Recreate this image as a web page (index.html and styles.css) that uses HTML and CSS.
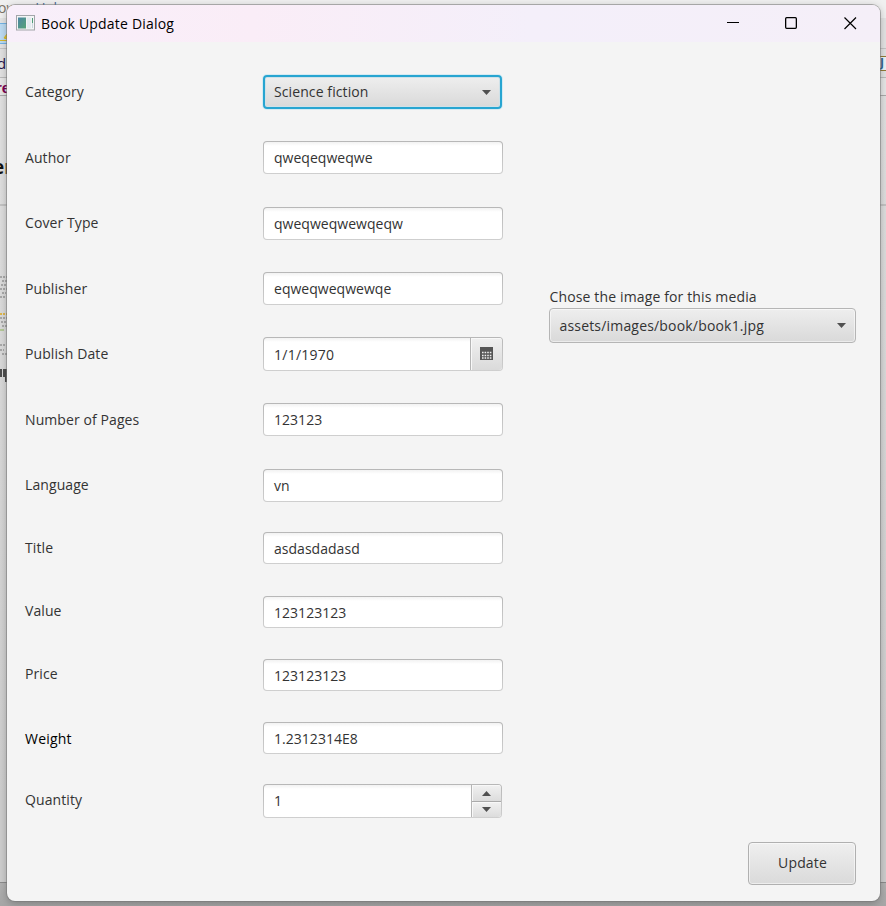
FILE: index.html
```html
<!DOCTYPE html>
<html lang="en">
<head>
<meta charset="utf-8">
<title>Book Update Dialog</title>
<link rel="stylesheet" href="styles.css">
</head>
<body>
<div class="backdrop">
  <div class="bd-menu"><span>ow</span><span>Help</span></div>
  <div class="bd-tool"><i><svg width="7" height="19"><path d="M0 16.500H7M4 14L7 10V15Z" fill="#e8c71c" stroke="#d9b92a"/></svg></i></div>
  <div class="bd-tab"><span>d</span><b class="bd-java">J</b></div>
  <div class="bd-sub"><span>re</span></div>
  <div class="bd-head"><span>er</span></div>
  <div class="bd-body">
    <svg width="7" height="118">
      <g stroke="#a9a9a9" stroke-width="2" stroke-dasharray="2 1"><path d="M0 11H7M2 15H7M1 19H7M0 23H7M2 27H6M0 31H5"/><path d="M0 52H7M1 56H7M2 60H7M0 79H5M0 84H4M2 88H7"/></g>
      <path d="M0 48H7" stroke="#e0b84c" stroke-width="2" stroke-dasharray="2 1"/><path d="M0 64H4" stroke="#b5c999" stroke-width="2"/>
      <path d="M1 103V111M4 103V111M6 103V116" stroke="#222" stroke-width="1.500"/>
    </svg>
  </div>
  <div class="bd-foot"></div>
</div>

<main class="window">
  <header class="titlebar">
    <svg class="app-icon" width="19" height="16" viewBox="0 0 19 16">
      <defs><linearGradient id="g" x1="0" y1="0" x2="1" y2="1"><stop offset="0" stop-color="#4c86a4"/><stop offset="1" stop-color="#55a477"/></linearGradient></defs>
      <rect x=".5" y=".5" width="18" height="14.500" fill="#f4f5f6" stroke="#a2a6aa"/>
      <rect x="2" y="2.500" width="8" height="11" fill="url(#g)"/>
      <rect x="11" y="2.500" width="4" height="11" fill="#e3ebf0"/>
      <path d="M16.500 3V8" stroke="#4f9c78"/><path d="M16.500 8V13" stroke="#c9d6de"/>
    </svg>
    <h1>Book Update Dialog</h1>
    <div class="controls">
      <svg class="min" width="13" height="13"><path d="M0 5.500H12" stroke="#000"/></svg>
      <svg width="13" height="13"><rect x=".65" y=".65" width="10.700" height="10.700" rx="1" fill="none" stroke="#000" stroke-width="1.300"/></svg>
      <svg width="13" height="13"><path d="M.5 .5L12 12M12 .5L.5 12" stroke="#000" stroke-width="1.200"/></svg>
    </div>
  </header>

  <div class="content">
    <form class="form">
      <label>Category</label>
      <div class="combo focused"><span>Science fiction</span><svg width="9" height="5"><path d="M0 0H9L4.500 5Z"/></svg></div>
      <label>Author</label><div class="field">qweqeqweqwe</div>
      <label class="up">Cover Type</label><div class="field">qweqweqwewqeqw</div>
      <label>Publisher</label><div class="field">eqweqweqwewqe</div>
      <label>Publish Date</label>
      <div class="field date"><span class="day">1/1/1970</span>
        <div class="cal"><svg width="13" height="13"><path d="M0 0H13V13H0Z" fill="#555"/><path d="M2 5.500H12M2 8.500H12M2 11H12" stroke="#eee" stroke-width="1.600" stroke-dasharray="1.600 1"/></svg></div>
      </div>
      <label>Number of Pages</label><div class="field">123123</div>
      <label class="up">Language</label><div class="field">vn</div>
      <label class="up">Title</label><div class="field short">asdasdadasd</div>
      <label class="up2">Value</label><div class="field short">123123123</div>
      <label class="up2">Price</label><div class="field short">123123123</div>
      <label class="dark">Weight</label><div class="field short">1.2312314E8</div>
      <label class="up">Quantity</label>
      <div class="field date spinner"><span>1</span>
        <div class="steps"><div><svg width="9" height="5"><path d="M0 5H9L4.500 0Z"/></svg></div><div><svg width="9" height="5"><path d="M0 0H9L4.500 5Z"/></svg></div></div>
      </div>
    </form>
    <aside class="side">
      <div class="media">
        <p>Chose the image for this media</p>
        <div class="combo"><span>assets/images/book/book1.jpg</span><svg width="9" height="5"><path d="M0 0H9L4.500 5Z"/></svg></div>
      </div>
      <button class="update" type="button">Update</button>
    </aside>
  </div>
</main>
</body>
</html>
```
FILE: styles.css
```css
* { box-sizing: border-box; }
body {
  margin: 0;
  width: 886px;
  height: 906px;
  overflow: hidden;
  position: relative;
  font: 14px/20px "Open Sans", "Noto Sans", sans-serif;
  color: #333;
}
.backdrop { height: 906px; display: flex; flex-direction: column; background: linear-gradient(#e4e4e4, #cecece 800px); overflow: hidden; }
.bd-menu { height: 18px; background: #f0f0f0; display: flex; gap: 18px; line-height: 15px; color: #7d7468; }
.bd-menu span:first-child { margin-left: -2px; }
.bd-menu span:last-child { color: #4a6a98; }
.bd-tool { height: 31px; padding-top: 5px; background: #e4e4e4; border-bottom: 1px solid #c5c5c5; }
.bd-tool i { display: block; width: 8px; height: 21px; background: #bddcf3; border: 1px solid #73b3e6; border-left: 0; }
.bd-tab { height: 29px; display: flex; justify-content: space-between; align-items: center; background: #e2e2e2; border-bottom: 1px solid #bbb; color: #24124e; font-size: 15px; }
.bd-tab span { margin-left: -3px; }
.bd-java { width: 6px; height: 15px; overflow: hidden; border: solid #947a36; border-width: 1px 0; background: #edf3f8; color: #31658f; font-size: 12px; line-height: 12px; }
.bd-sub { height: 18px; border-bottom: 1px solid #aaa; background: #e7e7e7; color: #7b0052; font: bold 15px/19px "Liberation Sans", sans-serif; }
.bd-sub span { margin-left: -4px; }
.bd-head { height: 110px; padding-top: 60px; border-bottom: 2px solid #c3c3c3; color: #111; font: bold 19px/22px "Open Sans", sans-serif; }
.bd-head span { margin-left: -7px; }
.bd-body { flex: 1; padding-top: 60px; border-bottom: 1px solid #8c8c8c; }
.bd-body svg { display: block; }
.bd-foot { height: 23px; background: linear-gradient(#b2b2b2, #a6a6a6); }

.window {
  position: absolute;
  left: 7px;
  top: 5px;
  width: 873px;
  height: 896px;
  border-radius: 8px;
  overflow: hidden;
  background: #f4f4f4;
  box-shadow: 0 0 0 1px rgba(120, 120, 120, .55), 0 2px 9px rgba(0, 0, 0, .28);
}
.titlebar { height: 37px; display: flex; align-items: center; padding: 0 23px 0 9px; background: linear-gradient(90deg, #f8effa, #faedf7 28%, #f4effa 60%, #f5eff8); }
.app-icon { margin-bottom: 1px; }
h1 { margin: 0 0 0 6px; font-size: 14px; font-weight: 400; color: #000; letter-spacing: .2px; }
.controls { margin-left: auto; display: flex; gap: 46px; }
.controls svg { display: block; }
.controls .min { margin-right: -1px; }

.content { display: flex; height: 859px; padding: 33px 24px 16px 18px; }
.form {
  display: grid;
  grid-template-columns: 238px 240px;
  grid-template-rows: 66px 66px 65px 65px 66px 66px 63px 64px 63px 63px 62px 34px;
  align-items: start;
  align-content: start;
}
label { line-height: 33px; letter-spacing: .09px; }
.up { line-height: 31px; }
.up2 { line-height: 29px; }
.dark { color: #000; letter-spacing: .2px; }
.field {
  height: 33px;
  padding: 0 10px;
  line-height: 32px;
  letter-spacing: .03px;
  background: linear-gradient(#f2f2f2, #fff 4px) padding-box, linear-gradient(#b7b7b7, #cfcfcf) border-box;
  border: 1px solid transparent;
  border-radius: 4px;
}
.short { height: 32px; line-height: 31px; }
.date { display: flex; height: 34px; padding-right: 0; justify-content: space-between; overflow: hidden; }
.day { letter-spacing: .25px; line-height: 34px; }
.cal { width: 32px; display: grid; place-items: center; border-left: 1px solid #b5b5b5; background: linear-gradient(#f0f0f0, #dadada); box-shadow: inset 1px 1px #f8f8f8; }
.cal svg { margin-bottom: 2px; }
.spinner { width: 239px; }
.steps { width: 30px; display: grid; grid-template-rows: 16px 16px; border-left: 1px solid #b5b5b5; }
.steps div { display: grid; place-items: center; background: linear-gradient(#f1f1f1, #dcdcdc); box-shadow: inset 1px 1px #f8f8f8; }
.steps div + div { border-top: 1px solid #aaa; }
.steps svg, .combo svg { fill: #505050; display: block; }
.combo {
  height: 35px;
  display: flex;
  align-items: center;
  justify-content: space-between;
  padding: 0 9px 0 9.5px;
  letter-spacing: .18px;
  border: 1px solid #b5b5b5;
  border-radius: 4px;
  background: linear-gradient(#eee, #d9d9d9);
  box-shadow: inset 0 0 0 1px rgba(255, 255, 255, .5);
}
.combo.focused { width: 239px; height: 34px; border: 2px solid #27a5d1; box-shadow: 0 0 0 1px #d5ebf3, inset 0 0 0 1px #cfe1e8; padding: 0 9px; letter-spacing: .1px; }

.side { flex: 1; display: flex; flex-direction: column; justify-content: space-between; align-items: flex-end; padding-top: 212px; }
.media { width: 307px; }
.media p { margin: 0 0 1px; padding-left: .5px; letter-spacing: .14px; }
.update { width: 108px; height: 43px; padding: 0 0 2px 1px; font: inherit; letter-spacing: .15px; color: #333; border: 1px solid #b0b0b0; border-radius: 4px; background: linear-gradient(#efefef, #dadada); box-shadow: inset 0 0 0 1px rgba(255, 255, 255, .5); }
```
